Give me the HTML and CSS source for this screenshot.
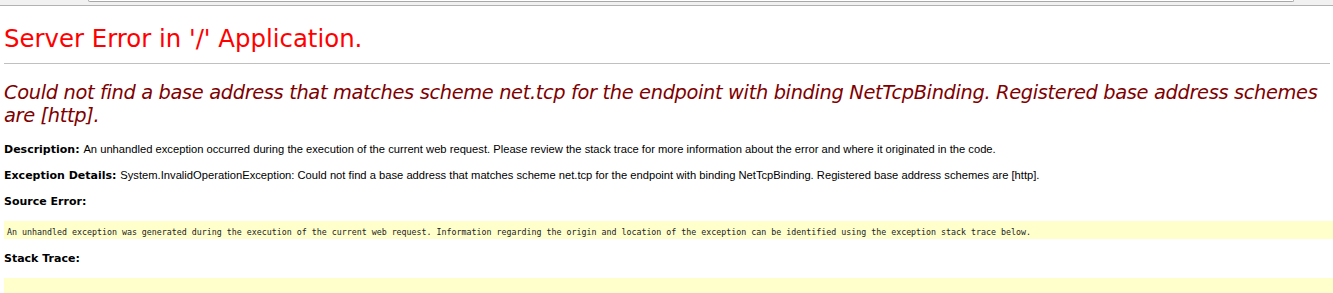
FILE: index.html
```html
<!DOCTYPE html>
<html>
<head>
<meta charset="utf-8">
<title>Could not find a base address</title>
<link rel="stylesheet" href="styles.css">
</head>
<body>
<div class="toolbar"><div class="addr"></div></div>
<main class="page">
  <h1 class="title">Server Error in '/' Application.</h1>
  <hr class="rule">
  <h2 class="message">Could not find a base address that matches scheme net.tcp for the endpoint with binding NetTcpBinding. Registered base address schemes are [http].</h2>
  <p class="line first"><b class="label">Description: </b>An unhandled exception occurred during the execution of the current web request. Please review the stack trace for more information about the error and where it originated in the code.</p>
  <p class="line"><b class="label">Exception Details: </b>System.InvalidOperationException: Could not find a base address that matches scheme net.tcp for the endpoint with binding NetTcpBinding. Registered base address schemes are [http].</p>
  <p class="line"><b class="label">Source Error:</b></p>
  <div class="box"><code class="code">An unhandled exception was generated during the execution of the current web request. Information regarding the origin and location of the exception can be identified using the exception stack trace below.</code></div>
  <p class="line"><b class="label">Stack Trace:</b></p>
  <div class="box tall"></div>
</main>
</body>
</html>
```
FILE: styles.css
```css
html, body {
  margin: 0;
  padding: 0;
  background: #ffffff;
}
body {
  font-family: "Liberation Sans", Arial, sans-serif;
  color: #000;
  overflow: hidden;
}
.toolbar {
  height: 5px;
  background: #f1f1f1;
  border-bottom: 1px solid #b2b2b2;
  display: flex;
}
.addr {
  margin-left: 88px;
  width: 1204px;
  height: 1px;
  background: #fff;
  border: 1px solid #a8a8a8;
  border-top: none;
  border-bottom-right-radius: 2px;
  border-bottom-left-radius: 2px;
}
.page {
  display: flex;
  flex-direction: column;
  padding: 0 0 0 4px;
}
.title {
  margin: 19px 0 0 0;
  height: 28px;
  font-family: "DejaVu Sans", Verdana, sans-serif;
  font-weight: normal;
  font-size: 24.4px;
  line-height: 28px;
  color: #ff0000;
  white-space: nowrap;
}
.rule {
  margin: 10px 3px 0 0;
  border: none;
  height: 1px;
  background: #c0c0c0;
}
.message {
  margin: 17px 0 0 0;
  height: 46px;
  font-family: "DejaVu Sans", Verdana, sans-serif;
  font-weight: normal;
  font-style: italic;
  font-size: 19.4px;
  letter-spacing: -0.35px;
  line-height: 23px;
  color: #800000;
}
.line {
  margin: 12px 0 0 0;
  height: 14px;
  font-size: 11.2px;
  line-height: 14px;
  white-space: nowrap;
}
.line.first {
  margin-top: 15px;
}
.label {
  font-family: "DejaVu Sans", Verdana, sans-serif;
  font-weight: bold;
  font-size: 11px;
}
.box {
  margin-top: 13px;
  background: #ffffcc;
  height: 18px;
  padding-left: 3px;
}
.code {
  font-family: "DejaVu Sans Mono", "Liberation Mono", monospace;
  font-size: 8.3px;
  line-height: 18px;
  color: #222;
  white-space: nowrap;
}
.tall {
  height: 20px;
}
```
